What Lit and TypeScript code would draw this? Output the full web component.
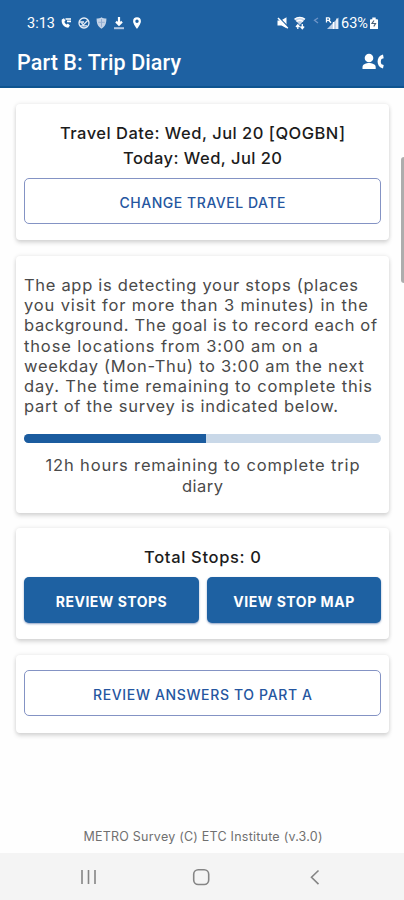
import { LitElement, html, css, svg } from "lit";
import { customElement, property } from "lit/decorators.js";

/** One line of text, tracked so that it spans the given width. */
@customElement("tracked-line")
class TrackedLine extends LitElement {
  @property() text = "";
  @property({ type: Number }) span = 0;

  static styles = css`
    :host { display: block; white-space: nowrap; }
    .line { display: inline-block; white-space: pre; }
  `;

  updated() {
    const line = this.renderRoot.querySelector(".line") as HTMLElement;
    line.style.letterSpacing = "0px";
    const natural = line.getBoundingClientRect().width;
    const gap = (this.span - natural) / (this.text.length - 1);
    line.style.letterSpacing = gap + "px";
    line.style.marginRight = -gap + "px";
  }

  render() {
    return html`<span class="line">${this.text}</span>`;
  }
}

const line = (text: string, span: number, cls = "") =>
  html`<tracked-line class=${cls} .text=${text} .span=${span}></tracked-line>`;

const BODY: [string, number][] = [
  ["The app is detecting your stops (places", 334],
  ["you visit for more than 3 minutes) in the", 344],
  ["background. The goal is to record each of", 353],
  ["those locations from 3:00 am on a", 294],
  ["weekday (Mon-Thu) to 3:00 am the next", 340],
  ["day. The time remaining to complete this", 348],
  ["part of the survey is indicated below.", 314],
];

const leftIcons = svg`
  <path d="M2.800 4.600 5 3.200l1.500 2.500-1.200 1c.4 1.200 1.100 2.100 2.300 2.700l1.300-.9 2 2.100-1.600 2.100C5.500 12.700 1.800 9 2.800 4.600z" fill="#fff"/>
  <path d="M6.500 4h5.500M8 6.300h4" stroke="#fff" stroke-width="1.700" fill="none"/>
  <g fill="none" stroke="#e8eef7" stroke-width="1.300">
    <circle cx="25" cy="8" r="5"/>
    <path d="m22.500 8 1.800 1.900 4.400-4.400M20 7h5M21 10.800h7"/>
  </g>
  <path d="M42.500 2.200c1.500 1 3 1.400 4.900 1.400 0 4.700-1 8-4.900 10.200-3.900-2.200-4.900-5.500-4.900-10.200 1.900 0 3.400-.4 4.900-1.400z" fill="#c3d3e8"/>
  <path d="M42.500 4v7.800M39.300 7.300h6.400" stroke="#94afd3" stroke-width="1"/>
  <path d="M60 2v7M57 6.600l3 3 3-3" stroke="#fff" stroke-width="2.200" fill="none"/>
  <path d="M55 13.200h10" stroke="#b4c8e2" stroke-width="2"/>
  <path d="M78 2.300a3.900 3.900 0 0 0-3.900 3.900c0 2.800 3.900 7.600 3.900 7.600s3.900-4.800 3.900-7.600A3.900 3.900 0 0 0 78 2.300zm0 2.200a1.700 1.700 0 1 1 0 3.400 1.700 1.700 0 0 1 0-3.400z" fill="#fff" fill-rule="evenodd"/>
`;

const rightIcons = svg`
  <path d="M1.500 5.500H5l5.500-3.300v11L5.500 10.500h-4z" fill="#fff"/>
  <path d="m3.200 2.800 8.800 9" stroke="#1e61a2" stroke-width="1.300"/>
  <path d="m2 3 9.800 10.200" stroke="#fff" stroke-width="1.500"/>
  <path d="M18.500 4.300c3-2.500 7.500-2.500 10.500 0L23.800 10z" fill="#c3d3e8"/>
  <path d="M18.500 4.300c3-2.500 7.500-2.500 10.500 0M20.500 6.500c2-1.500 4.500-1.500 6.500 0" stroke="#fff" stroke-width="1.300" fill="none"/>
  <path d="m20 12 1.800-2.200 1.800 2.200M24.500 11.500l1.800 2.200 1.800-2.200M21.800 10v4M26.300 9v4.500" stroke="#fff" stroke-width="1.300" fill="none"/>
  <path d="m42 3-3.500 2.300L42 8" stroke="#6f95c7" stroke-width="1.300" fill="none"/>
  <path d="M62.500 2.500V14H51z" fill="#b9cce4"/>
  <path d="M57.500 7v7M61 3.500V14" stroke="#fff" stroke-width="1.300"/>
  <path d="M50.500 7.500V2.800h2.300a1.300 1.300 0 0 1 0 2.500h-2M53 5.500l2 2.200" stroke="#fff" stroke-width="1.300" fill="none"/>
`;

@customElement("app-root")
class AppRoot extends LitElement {
  static styles = css`
    :host {
      display: flex;
      flex-direction: column;
      position: relative;
      box-sizing: border-box;
      width: 404px;
      height: 900px;
      overflow: hidden;
      background: #fefefe;
      color: #4a4a4a;
      font-family: Inter, "Open Sans", sans-serif;
    }
    svg { display: block; flex: none; }
    header {
      height: 88px;
      flex: none;
      box-sizing: border-box;
      background: #1e61a2;
      border-bottom: 2px solid #0e5490;
      color: #fff;
      font-family: Roboto, sans-serif;
    }
    .status {
      display: flex;
      align-items: center;
      height: 46px;
      padding: 0 24px 0 27px;
      font-size: 14.500px;
    }
    .clock { width: 32px; }
    .grow { flex: 1; }
    .title {
      display: flex;
      align-items: center;
      justify-content: space-between;
      height: 32px;
      padding: 0 20px 0 17px;
      font-size: 21.500px;
      font-weight: 500;
    }
    main {
      display: flex;
      flex-direction: column;
      gap: 16px;
      padding: 16px 15px 0 16px;
    }
    .card {
      box-sizing: border-box;
      padding: 0 8px;
      border-radius: 4px;
      background: #fff;
      box-shadow: 0 3px 4px rgba(0, 0, 0, .13), 0 0 4px rgba(0, 0, 0, .1);
    }
    .dates { height: 136px; padding-top: 17px; }
    .info { height: 257px; padding-top: 19px; margin-bottom: -1px; }
    .stops { height: 111px; padding-top: 17px; }
    .answers { height: 78px; padding-top: 15px; }
    .heading {
      color: #1c1c1c;
      font-size: 16.500px;
      font-weight: 550;
      line-height: 25px;
      text-align: center;
    }
    .button {
      display: flex;
      align-items: center;
      justify-content: center;
      box-sizing: border-box;
      width: 100%;
      height: 46px;
      padding-top: 2px;
      border: 1px solid #8493c4;
      border-radius: 5px;
      background: #fff;
      color: #2556a0;
      font-size: 14px;
      font-weight: 550;
    }
    .dates .button { margin-top: 7px; }
    .filled {
      border: 0;
      background: #1e61a2;
      color: #fff;
      font-weight: 650;
      box-shadow: 0 1px 2px rgba(30, 70, 140, .5);
    }
    .pair { display: grid; grid-template-columns: 1fr 1fr; gap: 8px; margin-top: 7px; }
    .text { font-size: 16.500px; line-height: 20.200px; }
    .center { text-align: center; }
    .track {
      height: 9px;
      margin: 18px 0 12px;
      border-radius: 5px;
      background: #c9d8e8;
      overflow: hidden;
    }
    .fill { height: 100%; background: #1b5c9f; }
    .credit {
      margin-top: auto;
      padding: 0 0 7px 2px;
      color: #707070;
      font-size: 12.500px;
      line-height: 18px;
      text-align: center;
    }
    nav {
      display: flex;
      flex: none;
      align-items: center;
      height: 47px;
      background: #f4f4f4;
    }
    .scroll {
      position: absolute;
      top: 157px;
      right: 0;
      width: 3px;
      height: 126px;
      border-radius: 3px 0 0 3px;
      background: #adadad;
    }
  `;

  render() {
    return html`
      <header>
        <div class="status">
          <span class="clock">${line("3:13", 28)}</span>
          <svg width="90" height="16" viewBox="0 0 90 16">${leftIcons}</svg>
          <span class="grow"></span>
          <svg width="65" height="16" viewBox="0 0 65 16">${rightIcons}</svg>
          ${line("63%", 27)}
          <svg width="12" height="16" viewBox="0 0 12 16">
            <path d="M4.300 2.500h3.400v1.700h1.500c.5 0 .8.300.8.800V14H2V5c0-.5.300-.8.800-.8h1.500z" fill="#fff"/>
            <path d="m6 5.500-2 3h3.500L5.800 11.500" stroke="#4c6178" stroke-width="1.200" fill="none"/>
          </svg>
        </div>
        <div class="title">
          ${line("Part B: Trip Diary", 164)}
          <svg width="23" height="18" viewBox="0 0 23 18">
            <circle cx="8" cy="5" r="4.300" fill="#fff"/>
            <path d="M1.500 16v-2c0-3 4-4 6.500-4s6.700 1 6.700 4v2z" fill="#fff"/>
            <path d="M22 1.500c-7.200 1.500-7.200 12.600 0 14.100l.7-3.500-2.200-.8c-.9-1.600-.9-3.600 0-5.300l2.200-.8z" fill="#fff"/>
          </svg>
        </div>
      </header>
      <main>
        <section class="card dates">
          ${line("Travel Date: Wed, Jul 20 [QOGBN]", 285, "heading")}
          ${line("Today: Wed, Jul 20", 159, "heading")}
          <div class="button">${line("CHANGE TRAVEL DATE", 166)}</div>
        </section>
        <section class="card info">
          ${BODY.map(([t, w]) => line(t, w, "text"))}
          <div class="track"><div class="fill" style="width:51%"></div></div>
          ${line("12h hours remaining to complete trip", 314, "text center")}
          ${line("diary", 41, "text center")}
        </section>
        <section class="card stops">
          ${line("Total Stops: 0", 117, "heading")}
          <div class="pair">
            <div class="button filled">${line("REVIEW STOPS", 111)}</div>
            <div class="button filled">${line("VIEW STOP MAP", 121)}</div>
          </div>
        </section>
        <section class="card answers">
          <div class="button">${line("REVIEW ANSWERS TO PART A", 219)}</div>
        </section>
      </main>
      <div class="credit">${line("METRO Survey (C) ETC Institute (v.3.0)", 239)}</div>
      <nav>
        <svg width="404" height="47" viewBox="0 0 404 47" fill="none" stroke="#858585" stroke-width="1.600">
          <path d="M82 17v14M88.500 17v14M95 17v14"/>
          <rect x="193.700" y="16.800" width="15" height="14.700" rx="4.500"/>
          <path d="m318.500 17.500-7 6.800 7 6.800"/>
        </svg>
      </nav>
      <div class="scroll"></div>
    `;
  }
}
